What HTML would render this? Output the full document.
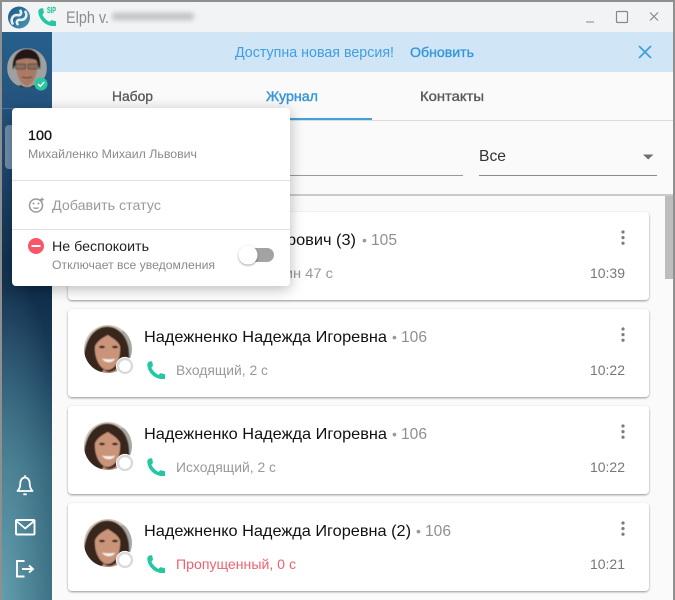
<!DOCTYPE html>
<html lang="ru"><head><meta charset="utf-8"><title>Elph</title>
<style>
html,body{margin:0;padding:0;width:675px;height:600px;overflow:hidden;background:#fafafa}
svg{display:block}
text{font-family:"Liberation Sans",sans-serif}
</style></head><body>
<svg xmlns="http://www.w3.org/2000/svg" width="675" height="600" viewBox="0 0 675 600">
<defs>
<linearGradient id="side" x1="0" y1="32" x2="0" y2="600" gradientUnits="userSpaceOnUse">
<stop offset="0" stop-color="#27608c"/><stop offset=".14" stop-color="#24527b"/><stop offset=".45" stop-color="#0f2c4a"/><stop offset=".62" stop-color="#1c4360"/><stop offset=".77" stop-color="#2c5a70"/><stop offset="1" stop-color="#2f6075"/>
</linearGradient>
<radialGradient id="glow" gradientUnits="userSpaceOnUse" cx="0" cy="0" r="1" gradientTransform="translate(2 600) scale(70 340)">
<stop offset="0" stop-color="#6ba9b8" stop-opacity=".85"/><stop offset="1" stop-color="#6ba9b8" stop-opacity="0"/>
</radialGradient>
<linearGradient id="logo" x1="0" y1="0" x2="1" y2="1"><stop offset="0" stop-color="#1d5585"/><stop offset="1" stop-color="#4a9ab0"/></linearGradient>
<filter id="b1" x="-20%" y="-20%" width="140%" height="140%"><feGaussianBlur stdDeviation=".65"/></filter>
<filter id="b3" x="-20%" y="-150%" width="140%" height="400%"><feGaussianBlur stdDeviation="2.500"/></filter>
<filter id="pop" x="-15%" y="-15%" width="130%" height="130%"><feDropShadow dx="0" dy="3" stdDeviation="7" flood-color="#000" flood-opacity=".28"/></filter>
<filter id="card" x="-3%" y="-10%" width="106%" height="125%"><feDropShadow dx="0" dy="1" stdDeviation="1" flood-color="#000" flood-opacity=".42"/></filter>
<filter id="th" x="-40%" y="-40%" width="180%" height="180%"><feDropShadow dx="0" dy="1" stdDeviation="1" flood-color="#000" flood-opacity=".4"/></filter>
<clipPath id="cf"><circle r="24"/></clipPath>
<clipPath id="cm"><circle cx="27" cy="68" r="20"/></clipPath>
<symbol id="face" overflow="visible" viewBox="-24 -24 48 48" width="48" height="48">
<g clip-path="url(#cf)"><g filter="url(#b1)">
<rect x="-26" y="-26" width="52" height="52" fill="#d3c7ba"/>
<rect x="13" y="-18" width="13" height="40" fill="#a9a8a2"/>
<path d="M-24 26C-26 6-23-17-5-22C10-25 20-12 21 2C22 12 20 20 18 26Z" fill="#38251f"/>
<path d="M-13-3C-10-9-4-12 0-14C4-11 9-9 12-3C13 7 9 20 0 21C-8 21-14 9-13-3Z" fill="#c99479"/>
<ellipse cx="-6" cy="-2" rx="3" ry="1.300" fill="#33211b"/><ellipse cx="7" cy="-2" rx="3" ry="1.300" fill="#33211b"/>
<path d="M-6 9.500C-2 10.500 4 10.500 7 9.500C5 14.500-3 14.500-6 9.500Z" fill="#f7f0ec"/>
<path d="M-4 20C-2 24 5 24 9 19L14 26H-8Z" fill="#b98d78"/>
</g></g>
<circle cx="17" cy="17" r="7" fill="#fff" stroke="#d9d9d9" stroke-width="2.400"/>
<circle cx="17" cy="17" r="8.600" fill="none" stroke="#fff" stroke-width="1"/>
</symbol>
<symbol id="phone" overflow="visible" viewBox="0 0 18 18" width="18" height="18">
<path d="M3.600 0.200C1.700.5.300 1.700.3 3.500C.6 11 7 17.600 14.600 18H18V13.300L13.500 12.100L11.400 13.900C8.600 12.500 5.800 9.700 4.400 6.800L6 4.700L5.100.2Z" fill="#23c8a0"/>
</symbol>
<symbol id="kebab" overflow="visible" viewBox="0 0 4 16" width="4" height="16">
<circle cx="2" cy="2" r="1.600" fill="#7c7c7c"/><circle cx="2" cy="7.600" r="1.600" fill="#7c7c7c"/><circle cx="2" cy="13.200" r="1.600" fill="#7c7c7c"/>
</symbol>
</defs>

<rect width="675" height="600" fill="#8f8f8f"/>
<rect x="2" y="2" width="671" height="598" fill="#fafafa"/>
<rect x="2" y="2" width="671" height="30" fill="#f1f3f5"/>

<!-- title bar -->
<circle cx="19" cy="17.500" r="11" fill="url(#logo)"/>
<path d="M12.500 23.500C10 18.500 13.500 14.500 18 15.200C20.500 15.500 22 13.500 20.500 10.800" fill="none" stroke="#e4eef3" stroke-width="2.600" stroke-linecap="round"/>
<path d="M25.500 11.800C28 16.500 24.500 20.500 20 19.800C17.500 19.500 16 21.500 17.500 24.200" fill="none" stroke="#e4eef3" stroke-width="2.600" stroke-linecap="round"/>
<use href="#phone" x="38" y="8"/>
<text x="47" y="13" font-size="8.500" font-weight="700" fill="#23c8a0" stroke="#23c8a0" stroke-width=".2" textLength="9" lengthAdjust="spacingAndGlyphs">SIP</text>
<text x="66" y="23" font-size="17" fill="#8c8c8c" textLength="43" lengthAdjust="spacingAndGlyphs">Elph v.</text>
<rect x="112" y="12.500" width="82" height="8" rx="3" fill="#c6c6c6" filter="url(#b3)"/>
<rect x="586" y="21.500" width="8" height="1" fill="#888"/>
<rect x="616.500" y="11.500" width="11" height="11" rx="1" fill="none" stroke="#888" stroke-width="1.200"/>
<path d="M650 12.500L658 20.500M658 12.500L650 20.500" stroke="#888" stroke-width="1.200" fill="none"/>

<!-- banner -->
<rect x="52" y="32" width="621" height="40" fill="#d0e5f5"/>
<text x="235" y="57" font-size="14.500" fill="#3f9fe0" textLength="159" lengthAdjust="spacingAndGlyphs">Доступна новая версия!</text>
<text x="410" y="57" font-size="14" fill="#3596da" stroke="#3596da" stroke-width=".35" textLength="64" lengthAdjust="spacingAndGlyphs">Обновить</text>
<path d="M639 46L651 58M651 46L639 58" stroke="#3f9fe0" stroke-width="1.800" fill="none"/>

<!-- tabs -->
<rect x="52" y="72" width="621" height="48" fill="#fafafa"/>
<text x="112" y="101" font-size="14" fill="#5a5a5a" stroke="#5a5a5a" stroke-width=".35" textLength="41" lengthAdjust="spacingAndGlyphs">Набор</text>
<text x="266" y="101" font-size="14" fill="#3596da" stroke="#3596da" stroke-width=".4" textLength="52" lengthAdjust="spacingAndGlyphs">Журнал</text>
<text x="420" y="101" font-size="14" fill="#5a5a5a" stroke="#5a5a5a" stroke-width=".35" textLength="64" lengthAdjust="spacingAndGlyphs">Контакты</text>
<rect x="52" y="120" width="621" height="1" fill="#dcdcdc"/>
<rect x="212" y="118" width="160" height="2" fill="#3f9fe0"/>

<!-- filter -->
<rect x="290" y="175" width="173" height="1" fill="#999"/>
<text x="479" y="161" font-size="16" fill="#333" textLength="27" lengthAdjust="spacingAndGlyphs">Все</text>
<rect x="479" y="175" width="178" height="1" fill="#8a8a8a"/>
<path d="M643 154.500H653.500L648.200 159.500Z" fill="#707070"/>
<rect x="52" y="194" width="621" height="2" fill="#cacaca"/>
<rect x="665" y="196" width="8" height="83" fill="#bdbdbd"/>

<!-- cards -->
<rect x="68" y="212" width="581" height="88" rx="4" fill="#fff" filter="url(#card)"/>
<rect x="68" y="309" width="581" height="88" rx="4" fill="#fff" filter="url(#card)"/>
<rect x="68" y="406" width="581" height="88" rx="4" fill="#fff" filter="url(#card)"/>
<rect x="68" y="503" width="581" height="88" rx="4" fill="#fff" filter="url(#card)"/>

<text x="144" y="245" font-size="16" fill="#111" textLength="143" lengthAdjust="spacingAndGlyphs">Михайленко Федо</text>
<text x="287" y="245" font-size="16" fill="#111" textLength="69" lengthAdjust="spacingAndGlyphs">рович (3)</text>
<text x="362" y="245" font-size="14" fill="#9a9a9a">•</text>
<text x="371" y="245" font-size="16" fill="#8f8f8f" textLength="26" lengthAdjust="spacingAndGlyphs">105</text>
<text x="176" y="278" font-size="14" fill="#999" textLength="157" lengthAdjust="spacingAndGlyphs">Исходящий, 1 мин 47 с</text>
<text x="590" y="278" font-size="14" fill="#777" textLength="35" lengthAdjust="spacingAndGlyphs">10:39</text>
<use href="#kebab" x="621" y="230"/>

<use href="#face" x="84" y="325"/>
<use href="#phone" x="147" y="361"/>
<text x="144" y="342" font-size="16" fill="#111" textLength="243" lengthAdjust="spacingAndGlyphs">Надежненко Надежда Игоревна</text>
<text x="392" y="342" font-size="14" fill="#9a9a9a">•</text>
<text x="401" y="342" font-size="16" fill="#8f8f8f" textLength="26" lengthAdjust="spacingAndGlyphs">106</text>
<text x="176" y="375" font-size="14" fill="#999" textLength="92" lengthAdjust="spacingAndGlyphs">Входящий, 2 с</text>
<text x="590" y="375" font-size="14" fill="#777" textLength="35" lengthAdjust="spacingAndGlyphs">10:22</text>
<use href="#kebab" x="621" y="327"/>

<use href="#face" x="84" y="422"/>
<use href="#phone" x="147" y="458"/>
<text x="144" y="439" font-size="16" fill="#111" textLength="243" lengthAdjust="spacingAndGlyphs">Надежненко Надежда Игоревна</text>
<text x="392" y="439" font-size="14" fill="#9a9a9a">•</text>
<text x="401" y="439" font-size="16" fill="#8f8f8f" textLength="26" lengthAdjust="spacingAndGlyphs">106</text>
<text x="176" y="472" font-size="14" fill="#999" textLength="100" lengthAdjust="spacingAndGlyphs">Исходящий, 2 с</text>
<text x="590" y="472" font-size="14" fill="#777" textLength="35" lengthAdjust="spacingAndGlyphs">10:22</text>
<use href="#kebab" x="621" y="424"/>

<use href="#face" x="84" y="519"/>
<use href="#phone" x="147" y="555"/>
<text x="144" y="536" font-size="16" fill="#111" textLength="267" lengthAdjust="spacingAndGlyphs">Надежненко Надежда Игоревна (2)</text>
<text x="416" y="536" font-size="14" fill="#9a9a9a">•</text>
<text x="425" y="536" font-size="16" fill="#8f8f8f" textLength="26" lengthAdjust="spacingAndGlyphs">106</text>
<text x="176" y="569" font-size="14" fill="#f2606f" textLength="120" lengthAdjust="spacingAndGlyphs">Пропущенный, 0 с</text>
<text x="590" y="569" font-size="14" fill="#777" textLength="35" lengthAdjust="spacingAndGlyphs">10:21</text>
<use href="#kebab" x="621" y="521"/>

<!-- sidebar -->
<rect x="2" y="32" width="50" height="568" fill="url(#side)"/>
<rect x="2" y="32" width="50" height="568" fill="url(#glow)"/>
<rect x="2" y="108" width="50" height="1" fill="#5a83a3" opacity=".7"/>
<rect x="5" y="125" width="30" height="44" rx="4" fill="#6f8ea8"/>
<g clip-path="url(#cm)"><g filter="url(#b1)">
<rect x="7" y="48" width="40" height="40" fill="#a0a0a0"/>
<path d="M13 70C11 58 18 49 27 49C37 49 42 58 40 70L36 60C30 58 22 58 17 61Z" fill="#221814"/>
<path d="M16 61C20 58 33 58 37 61C38 72 35 84 27 86C19 84 15 72 16 61Z" fill="#a97a65"/>
<path d="M4 92C10 87 18 86 21 85C25 88 30 88 33 85C40 86 46 88 50 92Z" fill="#2f2522"/>
<rect x="15.500" y="64" width="10" height="5" rx="1.500" fill="#74665f" opacity=".6" stroke="#2f2926" stroke-width="1"/>
<rect x="28" y="64" width="10" height="5" rx="1.500" fill="#74665f" opacity=".6" stroke="#2f2926" stroke-width="1"/>
<path d="M22 77C25 78 29 78 32 77" stroke="#73463a" stroke-width="1.200" fill="none"/>
</g></g>
<circle cx="41" cy="84" r="6.500" fill="#2ac6a0"/>
<path d="M38 84L40.300 86.300L44.200 82" stroke="#fff" stroke-width="1.400" fill="none"/>
<!-- bell -->
<path d="M17.500 491C20 488.500 20.300 486 20.300 483.500C20.300 480 22.300 477.500 25 477.500C27.700 477.500 29.700 480 29.700 483.500C29.700 486 30 488.500 32.500 491Z" fill="none" stroke="#fff" stroke-width="1.800" stroke-linejoin="round"/>
<path d="M23.300 494.300H26.700" stroke="#fff" stroke-width="1.800"/><rect x="24.200" y="475.200" width="1.600" height="2.300" fill="#fff"/>
<!-- mail -->
<rect x="16" y="520" width="18.500" height="14.500" rx="1" fill="none" stroke="#fff" stroke-width="1.900"/>
<path d="M17 521.500L25.200 528.500L33.500 521.500" fill="none" stroke="#fff" stroke-width="1.800"/>
<!-- logout -->
<path d="M24.500 561H17V576.500H24.500" fill="none" stroke="#fff" stroke-width="1.900"/>
<path d="M22 569H33M29 565.500L33 569L29 572.500" fill="none" stroke="#fff" stroke-width="1.900"/>

<!-- popup -->
<rect x="12" y="108" width="278" height="178" rx="4" fill="#fff" filter="url(#pop)"/>
<text x="28" y="140" font-size="14" fill="#111" stroke="#111" stroke-width=".35" textLength="24" lengthAdjust="spacingAndGlyphs">100</text>
<text x="28" y="158" font-size="12" fill="#8a8a8a" textLength="169" lengthAdjust="spacingAndGlyphs">Михайленко Михаил Львович</text>
<rect x="12" y="180" width="278" height="1" fill="#e0e0e0"/>
<circle cx="36" cy="205.500" r="6.500" fill="none" stroke="#999" stroke-width="1.500"/>
<circle cx="33.500" cy="203.500" r="1" fill="#999"/><circle cx="38.500" cy="203.500" r="1" fill="#999"/>
<path d="M32.500 207.500C34 209.500 38 209.500 39.500 207.500Z" fill="#999"/>
<path d="M42 197.500V201.500M40 199.500H44" stroke="#999" stroke-width="1.200"/>
<text x="52" y="210" font-size="14" fill="#9a9a9a" textLength="109" lengthAdjust="spacingAndGlyphs">Добавить статус</text>
<rect x="12" y="229" width="278" height="1" fill="#e0e0e0"/>
<circle cx="36" cy="246" r="8" fill="#f9566a"/>
<rect x="31.500" y="245" width="9" height="2" fill="#fff"/>
<text x="52" y="251" font-size="14" fill="#222" textLength="97" lengthAdjust="spacingAndGlyphs">Не беспокоить</text>
<text x="52" y="269" font-size="12" fill="#8a8a8a" textLength="163" lengthAdjust="spacingAndGlyphs">Отключает все уведомления</text>
<rect x="240" y="248" width="34" height="14" rx="7" fill="#a3a3a3"/>
<circle cx="248" cy="255" r="9.500" fill="#fff" filter="url(#th)"/>
</svg>
</body></html>
